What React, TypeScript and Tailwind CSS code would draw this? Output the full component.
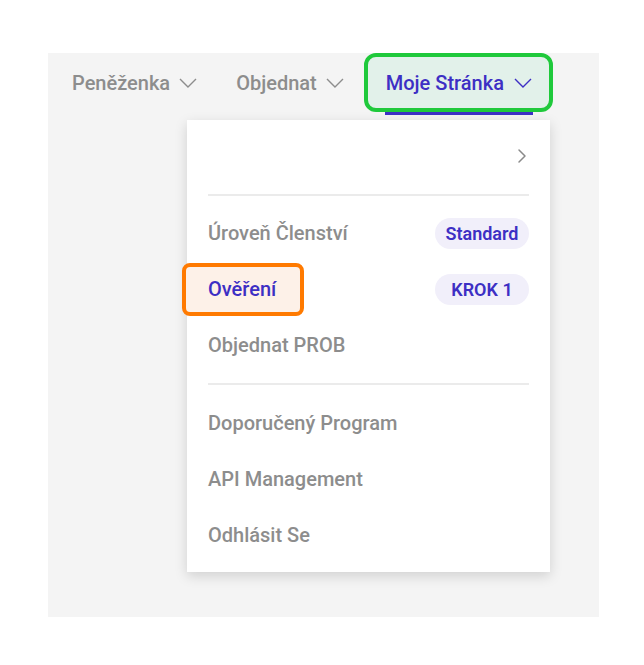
import { ChevronRight } from "lucide-react";

interface MenuItem {
  label: string;
  badge?: string;
  highlighted?: boolean;
}

const topItems: MenuItem[] = [
  { label: "Úroveň Členství", badge: "Standard" },
  { label: "Ověření", badge: "KROK 1", highlighted: true },
  { label: "Objednat PROB" },
];

const bottomItems: MenuItem[] = [
  { label: "Doporučený Program" },
  { label: "API Management" },
  { label: "Odhlásit Se" },
];

function Caret() {
  return (
    <svg width="18" height="10" viewBox="0 0 18 10" fill="none" className="shrink-0">
      <polyline points="1,1 9,9 17,1" stroke="currentColor" strokeWidth="1.4" />
    </svg>
  );
}

function MenuRow({ item }: { item: MenuItem }) {
  return (
    <div className="flex h-[56px] items-center justify-between">
      {item.highlighted ? (
        <span className="-ml-[26px] flex h-[53px] items-center rounded-[8px] border-4 border-[#ff7a00] bg-[#fdf1e8] pl-[22px] pr-[24px] text-[#3d2fc4]">
          {item.label}
        </span>
      ) : (
        <span className="text-[#8d8d8d]">{item.label}</span>
      )}
      {item.badge && (
        <span className="flex h-[31px] w-[94px] items-center justify-center rounded-full bg-[#f1effa] text-[18px] font-semibold text-[#3d2fc4]">
          {item.badge}
        </span>
      )}
    </div>
  );
}

export default function App() {
  return (
    <div className="min-h-[665px] bg-white pl-[48px] pt-[53px] font-['Roboto',sans-serif] font-medium">
      <div className="flex h-[564px] w-[551px] flex-col bg-[#f4f4f4]">
        {/* top navigation */}
        <nav className="flex h-[59px] items-center pl-[24px] text-[20px]">
          <div className="flex items-center gap-[9px] text-[#8d8d8d]">
            <span>Peněženka</span>
            <Caret />
          </div>
          <div className="ml-[39px] flex items-center gap-[9px] text-[#8d8d8d]">
            <span>Objednat</span>
            <Caret />
          </div>
          <div className="relative ml-[20px] flex h-[59px] items-center gap-[10px] rounded-[12px] border-4 border-[#1fc93b] bg-[#e2f1ea] pl-[18px] pr-[17px] text-[#3d2fc4]">
            <span>Moje Stránka</span>
            <Caret />
            <div className="absolute left-[17px] right-[16px] top-[calc(100%+4px)] h-[3px] bg-[#3d2fc4]" />
          </div>
        </nav>

        {/* dropdown */}
        <div className="ml-[139px] mt-[8px] flex h-[452px] w-[363px] flex-col bg-white px-[21px] text-[20px] shadow-[0_4px_12px_rgba(0,0,0,0.15)]">
          <div className="flex h-[74px] items-center justify-end pb-[2px]">
            <ChevronRight className="-mr-[5px] h-[24px] w-[24px] text-[#8a8a8a]" strokeWidth={1.5} />
          </div>
          <div className="h-[2px] bg-[#ebebeb]" />
          <div className="mt-[9px]">
            {topItems.map((item) => (
              <MenuRow key={item.label} item={item} />
            ))}
          </div>
          <div className="mt-[10px] h-[2px] bg-[#ebebeb]" />
          <div className="mt-[10px]">
            {bottomItems.map((item) => (
              <MenuRow key={item.label} item={item} />
            ))}
          </div>
        </div>
      </div>
    </div>
  );
}
